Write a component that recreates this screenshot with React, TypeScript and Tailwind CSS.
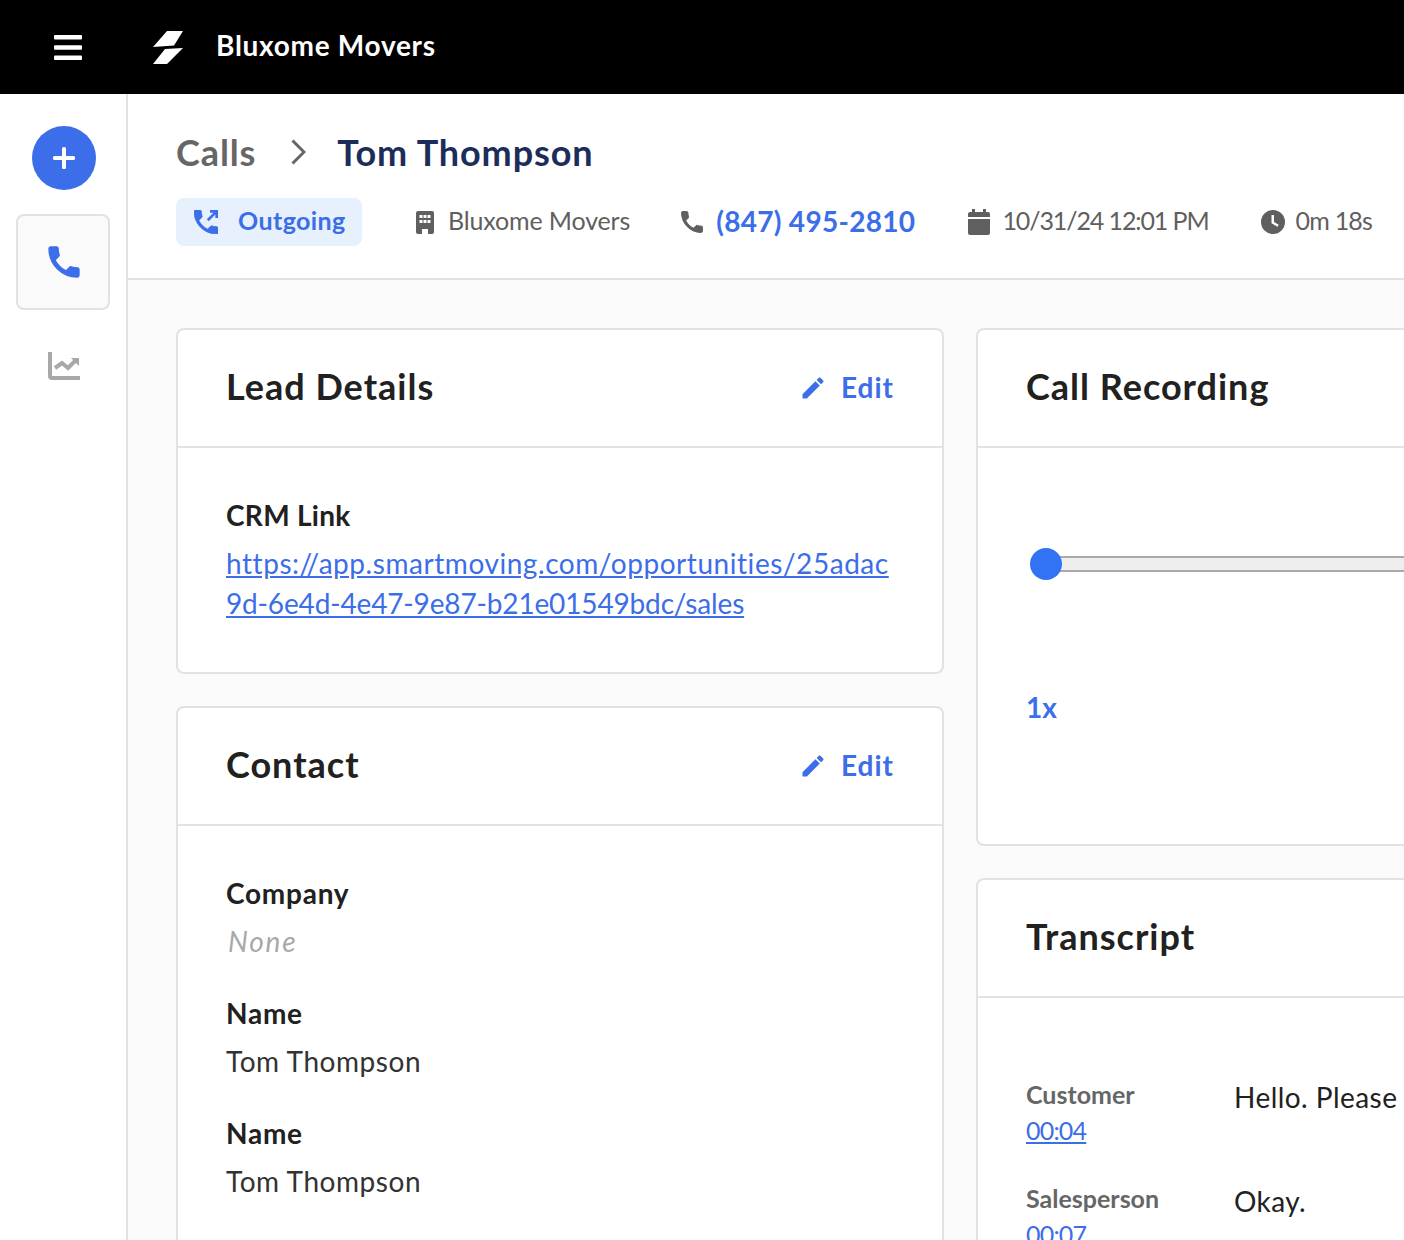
const phone =
  "M6.62 10.79c1.44 2.83 3.76 5.14 6.59 6.59l2.2-2.2c.27-.27.67-.36 1.02-.24 1.12.37 2.33.57 3.57.57.55 0 1 .45 1 1V20c0 .55-.45 1-1 1-9.39 0-17-7.61-17-17 0-.55.45-1 1-1h3.5c.55 0 1 .45 1 1 0 1.25.2 2.45.57 3.57.11.35.03.74-.25 1.02l-2.2 2.2z";
const pencil =
  "M3 17.25V21h3.75L17.81 9.94l-3.75-3.75L3 17.25zM20.71 7.04c.39-.39.39-1.02 0-1.41l-2.34-2.34c-.39-.39-1.02-.39-1.41 0l-1.83 1.83 3.75 3.75 1.83-1.83z";

function Icon({ d, className, bold }: { d: string; className: string; bold?: boolean }) {
  return (
    <svg
      viewBox="0 0 24 24"
      fill="currentColor"
      stroke={bold ? "currentColor" : "none"}
      strokeWidth={bold ? 0.8 : 0}
      strokeLinejoin="round"
      className={className}
    >
      <path d={d} />
    </svg>
  );
}

function Card({
  title,
  edit,
  children,
}: {
  title: string;
  edit?: boolean;
  children: React.ReactNode;
}) {
  return (
    <section className="rounded-lg border-2 border-[#e2e2e2] bg-white">
      <div className="flex h-[118px] items-center justify-between border-b-2 border-[#e2e2e2] px-12">
        <h2 className="pb-[5px] text-[36px] font-bold tracking-[1px] text-[#212121]">{title}</h2>
        {edit && (
          <button className="flex items-center gap-[14px] text-[28px] font-bold tracking-[1px] text-[#3b6ee8]">
            <Icon d={pencil} className="h-[28px] w-[28px]" />
            <span className="pb-[3px]">Edit</span>
          </button>
        )}
      </div>
      {children}
    </section>
  );
}

function Field({ label, children }: { label: string; children: React.ReactNode }) {
  return (
    <div>
      <div className="text-[28px] leading-[40px] font-bold tracking-[0.75px] text-[#212121]">{label}</div>
      <div className="mt-2 text-[28px] leading-[40px] tracking-[0.55px] text-[#333]">{children}</div>
    </div>
  );
}

export default function App() {
  return (
    <div className="flex h-[1240px] w-[1404px] flex-col overflow-hidden bg-[#fafafa] font-['Lato',sans-serif]">
      <header className="flex h-[94px] shrink-0 items-center bg-black pl-[54px] text-white">
        <svg viewBox="0 0 28 25" className="h-[25px] w-[28px]" fill="currentColor">
          <rect y="0" width="28" height="4.5" rx="1" />
          <rect y="10.2" width="28" height="4.5" rx="1" />
          <rect y="20.5" width="28" height="4.5" rx="1" />
        </svg>
        <svg viewBox="0 0 34 34" className="ml-[70px] h-[34px] w-[34px]" fill="currentColor">
          <polygon points="15,1 31,1 22,15.5 1,17" />
          <polygon points="13,19 31,18 15,34 1,34" />
        </svg>
        <span className="ml-[30px] pb-[4px] text-[28px] font-bold tracking-[0.7px]">Bluxome Movers</span>
      </header>
      <div className="flex min-h-0 flex-1">
        <aside className="flex w-[128px] shrink-0 flex-col items-center border-r-2 border-[#e2e2e2] bg-white pt-8">
          <button className="ml-[2px] flex h-16 w-16 items-center justify-center rounded-full bg-[#3b6ee8] text-white">
            <svg viewBox="0 0 22 22" className="h-[22px] w-[22px]" fill="currentColor">
              <rect x="9" y="0" width="4" height="22" rx="1.5" />
              <rect x="0" y="9" width="22" height="4" rx="1.5" />
            </svg>
          </button>
          <button className="mt-6 flex h-[96px] w-[94px] items-center justify-center rounded-lg border-2 border-[#e2e2e2] bg-[#fafafa] pl-[2px] text-[#3b6ee8]">
            <Icon d={phone} bold className="h-[40px] w-[40px]" />
          </button>
          <svg
            viewBox="0 0 32 28"
            className="ml-[2px] mt-[42px] h-[28px] w-[32px] text-[#a8a8a8]"
            fill="none"
            stroke="currentColor"
          >
            <path d="M2 0v24a2 2 0 0 0 2 2h28" strokeWidth="4" />
            <path d="M7 16l7-5 6 5 8-8" strokeWidth="4" />
            <path d="M23 6h8v8z" fill="currentColor" stroke="none" />
          </svg>
        </aside>
        <main className="min-w-0 flex-1 overflow-hidden">
          <div className="h-[186px] border-b-2 border-[#e2e2e2] bg-white pl-12 pt-[32px]">
            <div className="flex h-[52px] items-center text-[36px] font-bold tracking-[0.9px]">
              <span className="text-[#666]">Calls</span>
              <svg viewBox="0 0 15 26" className="ml-[35px] mr-[31px] h-[26px] w-[15px] text-[#666]" fill="none" stroke="currentColor" strokeWidth="3">
                <path d="M1.5 1.5L13 13 1.5 24.5" />
              </svg>
              <span className="text-[#1c2d5a]">Tom Thompson</span>
            </div>
            <div className="mt-[20px] flex items-center whitespace-nowrap text-[25px] text-[#5f5f5f]">
              <div className="flex h-[48px] w-[186px] items-center rounded-lg bg-[#e6f1fd] pl-[18px] font-bold tracking-[0.4px] text-[#3b6ee8]">
                <svg viewBox="3 3 18 18" className="h-[24px] w-[24px]" fill="currentColor">
                  <path d={phone} stroke="currentColor" strokeWidth="0.6" strokeLinejoin="round" />
                  <path d="M21 3v6h-2V6.4l-5 5-1.4-1.4 5-5H15V3z" />
                </svg>
                <span className="ml-[20px] pb-[2px]">Outgoing</span>
              </div>
              <div className="ml-[54px] flex items-center">
                <svg viewBox="0 0 18 23" className="h-[23px] w-[18px]" fill="currentColor">
                  <path
                    fillRule="evenodd"
                    d="M2 0h14a2 2 0 0 1 2 2v19a2 2 0 0 1-2 2h-4v-5H6v5H2a2 2 0 0 1-2-2V2a2 2 0 0 1 2-2zM3.5 4v3h3V4zm4 0v3h3V4zm4 0v3h3V4zM3.5 9v3h3V9zm4 0v3h3V9zm4 0v3h3V9z"
                  />
                </svg>
                <span className="ml-[14px] pb-[2px] tracking-[-0.15px]">Bluxome Movers</span>
              </div>
              <div className="ml-[48px] flex items-center">
                <Icon d={phone} bold className="h-[28px] w-[28px]" />
                <span className="ml-[10px] pb-[2px] text-[28px] font-bold tracking-[0.3px] text-[#3b6ee8]">(847) 495-2810</span>
              </div>
              <div className="ml-[53px] flex items-center">
                <svg viewBox="0 0 22 26" className="h-[26px] w-[22px]" fill="currentColor">
                  <path d="M4 0h3v3h8V0h3v3h2a2 2 0 0 1 2 2v3H0V5a2 2 0 0 1 2-2h2zM0 10h22v14a2 2 0 0 1-2 2H2a2 2 0 0 1-2-2z" />
                </svg>
                <span className="ml-[12px] pb-[2px] tracking-[-1.1px]">10/31/24 12:01 PM</span>
              </div>
              <div className="ml-[52px] flex items-center">
                <svg viewBox="0 0 24 24" className="h-[24px] w-[24px]" fill="currentColor">
                  <path
                    fillRule="evenodd"
                    d="M12 0a12 12 0 1 1 0 24 12 12 0 0 1 0-24zm-1.5 5v8.2l6 3.6 1.2-2-4.7-2.8V5z"
                  />
                </svg>
                <span className="ml-[11px] pb-[2px] tracking-[-0.8px]">0m 18s</span>
              </div>
            </div>
          </div>
          <div className="flex gap-[32px] pl-12 pt-[48px]">
            <div className="flex w-[768px] shrink-0 flex-col gap-[32px]">
              <Card title="Lead Details" edit>
                <div className="h-[224px] px-12 pt-[47px]">
                  <div className="text-[28px] leading-[40px] font-bold tracking-[0.3px] text-[#212121]">CRM Link</div>
                  <a href="#" className="mt-2 block whitespace-nowrap text-[28px] leading-[40px] text-[#3b6ee8] underline">
                    <span className="block tracking-[0.55px]">https://app.smartmoving.com/opportunities/25adac</span>
                    <span className="block tracking-[-0.15px]">9d-6e4d-4e47-9e87-b21e01549bdc/sales</span>
                  </a>
                </div>
              </Card>
              <Card title="Contact" edit>
                <div className="flex flex-col gap-[32px] px-12 pb-[60px] pt-[47px]">
                  <Field label="Company">
                    <span className="pl-[2px] italic tracking-[1.8px] text-[#a8a8a8]">None</span>
                  </Field>
                  <Field label="Name">Tom Thompson</Field>
                  <Field label="Name">Tom Thompson</Field>
                </div>
              </Card>
            </div>
            <div className="flex w-[768px] shrink-0 flex-col gap-[32px]">
              <Card title="Call Recording">
                <div className="h-[396px] px-12 pt-[108px]">
                  <div className="relative ml-[20px] h-4 border-y-2 border-[#aaa] bg-[#eee]">
                    <div className="absolute left-[-16px] top-1/2 h-8 w-8 -translate-y-1/2 rounded-full bg-[#3273f6]" />
                  </div>
                  <div className="mt-[114px] text-[28px] font-bold text-[#3b6ee8]">1x</div>
                </div>
              </Card>
              <Card title="Transcript">
                <div className="px-12 pt-[78px]">
                  <div className="flex">
                    <div className="w-[208px] shrink-0">
                      <div className="text-[25px] leading-[36px] font-bold text-[#666]">Customer</div>
                      <a href="#" className="text-[25px] leading-[36px] tracking-[-0.8px] text-[#3b6ee8] underline">00:04</a>
                    </div>
                    <div className="mt-[3px] whitespace-nowrap text-[28px] leading-[36px] tracking-[0.45px] text-[#212121]">Hello. Please</div>
                  </div>
                  <div className="mt-[32px] flex">
                    <div className="w-[208px] shrink-0">
                      <div className="text-[25px] leading-[36px] font-bold text-[#666]">Salesperson</div>
                      <a href="#" className="text-[25px] leading-[36px] tracking-[-0.8px] text-[#3b6ee8] underline">00:07</a>
                    </div>
                    <div className="mt-[3px] text-[28px] leading-[36px] tracking-[0.4px] text-[#212121]">Okay.</div>
                  </div>
                </div>
              </Card>
            </div>
          </div>
        </main>
      </div>
    </div>
  );
}
